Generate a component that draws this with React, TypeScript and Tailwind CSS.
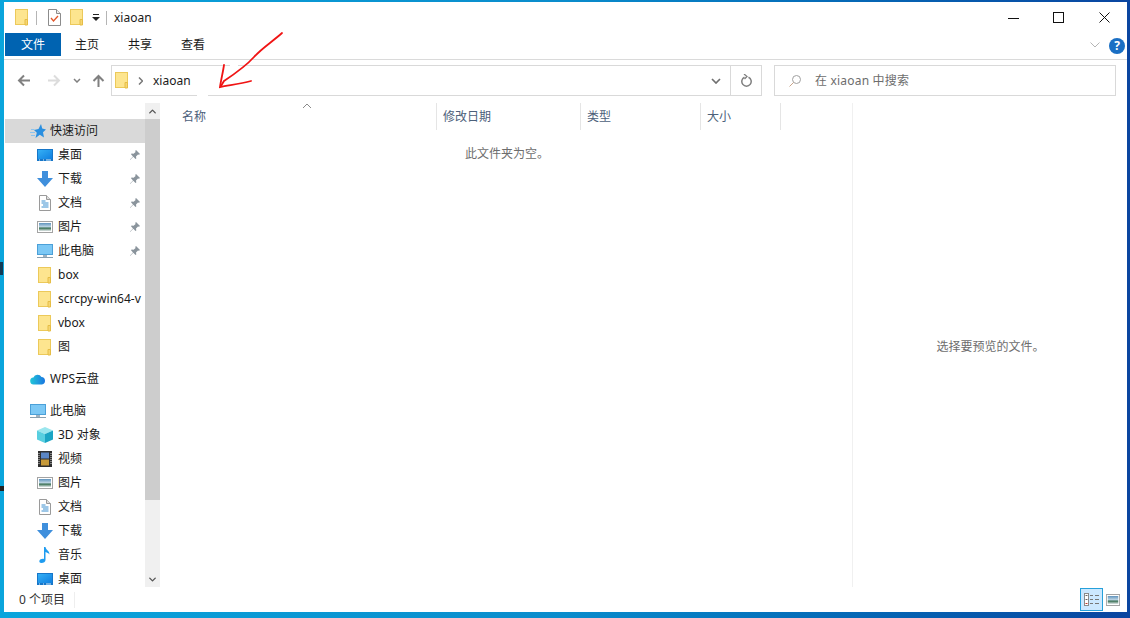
import { ChevronDown, ChevronUp } from "lucide-react";
import type { ReactNode } from "react";

/** Explorer window showing an empty folder, with a hand-drawn red arrow on top. */

function FolderIcon() {
  return (
    <svg width="14" height="17" viewBox="0 0 14 17" aria-hidden="true">
      <rect x="0.5" y="0.5" width="12" height="15" fill="#fde58f" stroke="#ecc95a" />
      <path d="M10 16V10.5h2.5V16z" fill="#f6d673" stroke="#e6bd45" strokeWidth="1" />
    </svg>
  );
}

function ChecklistIcon() {
  return (
    <svg width="13" height="17" viewBox="0 0 13 17" aria-hidden="true">
      <path d="M.5.5h8l4 4v12H.5z" fill="#fff" stroke="#8c8c8c" />
      <path d="M8.5.5v4h4" fill="#eee" stroke="#8c8c8c" />
      <path d="M3 9l2.500 3L10 7" fill="none" stroke="#e2572b" strokeWidth="1.300" />
    </svg>
  );
}

function StarIcon() {
  return (
    <svg width="16" height="15" viewBox="0 0 16 15" aria-hidden="true">
      <path d="M11 0l1.200 4.500L16 5.500l-3 2.800 1 5.200-4.200-2.800L5.500 14l1.300-5.200L4 6l4.500-1z" fill="#2a8fe0" />
      <path d="M1 5.500h3.500M0 8.500h5M1 11.500h4" stroke="#8cc4ee" strokeWidth="1" />
    </svg>
  );
}

function DesktopIcon() {
  return (
    <svg width="16" height="12" viewBox="0 0 16 12" aria-hidden="true">
      <defs>
        <linearGradient id="deskFill" x1="0" y1="0" x2="1" y2="1">
          <stop offset="0" stopColor="#35b0f5" />
          <stop offset="1" stopColor="#0f7fe0" />
        </linearGradient>
      </defs>
      <rect width="16" height="12" fill="#1776c8" />
      <rect x="1" y="1" width="14" height="9" fill="url(#deskFill)" />
      <path d="M2 11h1M6 11h1M9 11h5" stroke="#d6ecfb" strokeWidth="1" />
    </svg>
  );
}

function DownloadIcon() {
  return (
    <svg width="16" height="16" viewBox="0 0 16 16" aria-hidden="true">
      <path d="M5 0h6v7h5l-8 9-8-9h5z" fill="#3f8fdc" />
    </svg>
  );
}

function DocIcon() {
  return (
    <svg width="12" height="16" viewBox="0 0 12 16" aria-hidden="true">
      <path d="M.5.500h7l4 4v11H.5z" fill="#fff" stroke="#9a9a9a" />
      <path d="M7.500.500v4h4" fill="#ddd" stroke="#9a9a9a" />
      <path d="M2.500 6h4M2.500 8h7M4 10h5.500M2.500 12h7" stroke="#3a8fd0" strokeWidth="1" />
    </svg>
  );
}

function PictureIcon({ width = 16 }: { width?: number }) {
  return (
    <svg width={width} height="12" viewBox="0 0 16 12" preserveAspectRatio="none" aria-hidden="true">
      <defs>
        <linearGradient id="picSky" x1="0" y1="0" x2="0" y2="1">
          <stop offset="0" stopColor="#5f93bd" />
          <stop offset="0.450" stopColor="#b9d2e2" />
          <stop offset="0.650" stopColor="#3f7459" />
          <stop offset="1" stopColor="#e3e8ea" />
        </linearGradient>
      </defs>
      <rect x="0.500" y="0.500" width="15" height="11" fill="#fff" stroke="#a3a3a3" />
      <rect x="2" y="2" width="12" height="8" fill="url(#picSky)" />
    </svg>
  );
}

function PcIcon() {
  return (
    <svg width="16" height="15" viewBox="0 0 16 15" aria-hidden="true">
      <rect x="0.500" y="0.500" width="15" height="10" fill="#7cc8f5" stroke="#4ba0d8" />
      <rect x="6" y="11" width="4" height="2" fill="#9fb2c0" />
      <rect y="13" width="16" height="1" fill="#8aa0b0" />
    </svg>
  );
}

function CloudIcon() {
  return (
    <svg width="16" height="12" viewBox="0 0 16 12" aria-hidden="true">
      <defs>
        <linearGradient id="wpsCloud" x1="0" x2="1">
          <stop offset="0" stopColor="#22c7d8" />
          <stop offset="1" stopColor="#1a76e0" />
        </linearGradient>
      </defs>
      <path d="M4 11.500a3.500 3.500 0 0 1-.6-7A4.500 4.500 0 0 1 11.500 4 3.800 3.800 0 0 1 12 11.500z" fill="url(#wpsCloud)" />
    </svg>
  );
}

function CubeIcon() {
  return (
    <svg width="16" height="16" viewBox="0 0 16 16" aria-hidden="true">
      <path d="M8 0l8 3.500L8 7 0 3.500z" fill="#9ae6ee" />
      <path d="M0 3.500L8 7v9l-8-3.500z" fill="#58cfe0" />
      <path d="M16 3.500L8 7v9l8-3.500z" fill="#1ba5c4" />
    </svg>
  );
}

function FilmIcon() {
  return (
    <svg width="14" height="16" viewBox="0 0 14 16" aria-hidden="true">
      <rect width="14" height="16" fill="#2f2f2f" />
      <rect x="3" y="1.500" width="8" height="6" fill="#5b86c4" />
      <rect x="3" y="8.500" width="8" height="6" fill="#c79a3a" />
      <path d="M1 2v12M13 2v12" stroke="#d8d8d8" strokeWidth="1" strokeDasharray="1 1" />
    </svg>
  );
}

function MusicIcon() {
  return (
    <svg width="12" height="16" viewBox="0 0 12 16" aria-hidden="true">
      <path d="M5 0h1.500c.4 3 4 3.500 4 7.500-1-1.500-2.500-2-4-2.500v8c0 2-2 3-4 3S0 14.500.5 13.500 3 11.500 5 12z" fill="#1e9cf0" />
    </svg>
  );
}

function PinIcon() {
  return (
    <svg width="10" height="10" viewBox="0 0 10 10" aria-hidden="true">
      <path d="M6 0l4 4-1 .8-1-.3L6 6.500l.3 2L5.500 9 3.300 6.700 0 10l-.2-.2L3 6.400 1 4.300l.6-.7 2 .2L5.600 2l-.4-1z" fill="#8a949c" />
    </svg>
  );
}

function NavArrow({ d, className }: { d: string; className: string }) {
  return (
    <svg className={className} width="13" height="13" viewBox="0 0 13 13" fill="none" aria-hidden="true">
      <path d={d} stroke="currentColor" strokeWidth="2" />
    </svg>
  );
}

function NavRow({ icon, label, pinned, deep = true, active = false }: { icon: ReactNode; label: string; pinned?: boolean; deep?: boolean; active?: boolean }) {
  return (
    <div className={`flex h-6 items-center whitespace-nowrap ${active ? "bg-[#d9d9d9]" : ""} ${deep ? "pl-[32px]" : "pl-[25px]"}`}>
      <span className="flex w-4 shrink-0 justify-center">{icon}</span>
      <span className={`min-w-0 flex-1 ${deep ? "ml-[5px]" : "ml-[4px]"}`}>{label}</span>
      {pinned && (
        <span className="mr-[5px] ml-1 flex w-[10px] shrink-0">
          <PinIcon />
        </span>
      )}
    </div>
  );
}

function ColumnHead({ label, className }: { label: string; className: string }) {
  return <div className={`flex h-full shrink-0 items-center border-r border-[#e5e5e5] ${className}`}>{label}</div>;
}

export default function App() {
  return (
    <div className="relative h-[618px] w-[1130px] overflow-hidden bg-gradient-to-r from-[#0aa5dc] via-[#0a8ccc] to-[#0a45a0] pt-[2px] pr-[3px] pb-[6px] pl-[4px] font-['Noto_Sans','Noto_Sans_CJK_SC',sans-serif] text-[12px] text-[#1a1a1a]">
      <div className="flex h-full flex-col bg-white">
        {/* title bar */}
        <div className="flex h-[31px] shrink-0 items-center pl-[11px]">
          <FolderIcon />
          <span className="ml-[7px] h-[14px] w-px bg-[#b5b5b5]" />
          <span className="ml-[11px] flex">
            <ChecklistIcon />
          </span>
          <span className="ml-[9px] flex">
            <FolderIcon />
          </span>
          <svg className="ml-[8px]" width="8" height="7" viewBox="0 0 8 7" aria-hidden="true">
            <path d="M1 0h6v1H1zM0 3h8L4 7z" fill="#222" />
          </svg>
          <span className="ml-[6px] h-[14px] w-px bg-[#b5b5b5]" />
          <span className="ml-[7px] text-[12px]">xiaoan</span>
          <div className="ml-auto flex items-center pr-[17px]">
            <svg width="12" height="12" viewBox="0 0 12 12" aria-hidden="true">
              <path d="M1 6.500h11" stroke="#111" strokeWidth="1" />
            </svg>
            <svg className="ml-[34px]" width="11" height="11" viewBox="0 0 11 11" aria-hidden="true">
              <rect x="0.500" y="0.500" width="10" height="10" fill="none" stroke="#111" />
            </svg>
            <svg className="ml-[35px]" width="11" height="11" viewBox="0 0 11 11" aria-hidden="true">
              <path d="M.5.500l10 10M10.500.500l-10 10" stroke="#111" strokeWidth="1" />
            </svg>
          </div>
        </div>

        {/* ribbon tabs */}
        <div className="flex h-[27px] shrink-0 border-b border-[#dadada] pr-[2px]">
          <div className="ml-px flex h-[23px] w-[56px] items-center justify-center bg-[#0063b1] text-white">文件</div>
          <div className="ml-[14px] flex h-[23px] items-center">主页</div>
          <div className="ml-[29px] flex h-[23px] items-center">共享</div>
          <div className="ml-[29px] flex h-[23px] items-center">查看</div>
          <div className="ml-auto flex h-[23px] items-center">
            <svg width="10" height="6" viewBox="0 0 10 6" aria-hidden="true">
              <path d="M.5.500L5 5 9.500.500" fill="none" stroke="#b5b5b5" />
            </svg>
            <span className="mt-[3px] ml-[9px] flex h-4 w-4 items-center justify-center rounded-full bg-[#1a6fc4] text-[12px] font-bold text-white">?</span>
          </div>
        </div>

        {/* address row */}
        <div className="flex h-[43px] shrink-0 items-start pt-[5px]">
          <div className="flex h-[31px] w-[107px] shrink-0 items-center">
            <NavArrow className="ml-[13px] text-[#808080]" d="M13 6.500H2M7 1.500l-5 5 5 5" />
            <NavArrow className="ml-[18px] text-[#dcdcdc]" d="M0 6.500h11M6 1.500l5 5-5 5" />
            <svg className="ml-[12px] text-[#808080]" width="8" height="5" viewBox="0 0 8 5" fill="none" aria-hidden="true">
              <path d="M1 1l3 3 3-3" stroke="currentColor" strokeWidth="1.500" />
            </svg>
            <NavArrow className="ml-[11px] text-[#808080]" d="M6.500 13V2M1.500 7l5-5 5 5" />
          </div>
          <div className="flex h-[31px] w-[651px] shrink-0 items-center border border-[#d9d9d9]">
            <span className="ml-[3px] flex">
              <FolderIcon />
            </span>
            <svg className="ml-[9px]" width="5" height="8" viewBox="0 0 5 8" aria-hidden="true">
              <path d="M1 .5L4.500 4 1 7.500" fill="none" stroke="#777" strokeWidth="1.500" />
            </svg>
            <span className="ml-[10px]">xiaoan</span>
            <svg className="mr-[9px] ml-auto text-[#707070]" width="10" height="6" viewBox="0 0 10 6" fill="none" aria-hidden="true">
              <path d="M1 1l4 4 4-4" stroke="currentColor" strokeWidth="1.700" />
            </svg>
            <div className="flex h-full w-[31px] items-center justify-center border-l border-[#d9d9d9] text-[#808080]">
              <svg width="11" height="13" viewBox="0 0 11 13" fill="none" aria-hidden="true">
                <path d="M3.500 3.200A4.700 4.700 0 1 0 7.500 3.200" stroke="currentColor" strokeWidth="1.500" />
                <path d="M3 0l3 2.500L3.500 5" stroke="currentColor" strokeWidth="1.300" />
              </svg>
            </div>
          </div>
          <div className="ml-[12px] flex h-[31px] w-[342px] shrink-0 items-center border border-[#d9d9d9] text-[#6d6d6d]">
            <svg className="ml-[14px]" width="12" height="12" viewBox="0 0 12 12" aria-hidden="true">
              <circle cx="7.500" cy="4.500" r="4" fill="none" stroke="#a0a0a0" />
              <path d="M4.500 7.500L.5 11.500" stroke="#c9a58a" strokeWidth="1" />
            </svg>
            <span className="ml-[14px] tracking-[0.2px]">在 xiaoan 中搜索</span>
          </div>
        </div>

        {/* body */}
        <div className="flex min-h-0 flex-1">
          <div className="w-[141px] shrink-0 overflow-hidden pt-[16px] pl-px">
            <NavRow active deep={false} icon={<StarIcon />} label="快速访问" />
            <NavRow pinned icon={<DesktopIcon />} label="桌面" />
            <NavRow pinned icon={<DownloadIcon />} label="下载" />
            <NavRow pinned icon={<DocIcon />} label="文档" />
            <NavRow pinned icon={<PictureIcon />} label="图片" />
            <NavRow pinned icon={<PcIcon />} label="此电脑" />
            <NavRow icon={<FolderIcon />} label="box" />
            <NavRow icon={<FolderIcon />} label="scrcpy-win64-v" />
            <NavRow icon={<FolderIcon />} label="vbox" />
            <NavRow icon={<FolderIcon />} label="图" />
            <div className="mt-2">
              <NavRow deep={false} icon={<CloudIcon />} label="WPS云盘" />
            </div>
            <div className="mt-2">
              <NavRow deep={false} icon={<PcIcon />} label="此电脑" />
            </div>
            <NavRow icon={<CubeIcon />} label="3D 对象" />
            <NavRow icon={<FilmIcon />} label="视频" />
            <NavRow icon={<PictureIcon />} label="图片" />
            <NavRow icon={<DocIcon />} label="文档" />
            <NavRow icon={<DownloadIcon />} label="下载" />
            <NavRow icon={<MusicIcon />} label="音乐" />
            <NavRow icon={<DesktopIcon />} label="桌面" />
          </div>

          {/* sidebar scrollbar */}
          <div className="flex w-[15px] shrink-0 flex-col bg-[#f0f0f0]">
            <div className="flex h-[16px] items-center justify-center text-[#555]">
              <ChevronUp size={11} strokeWidth={3} />
            </div>
            <div className="h-[381px] bg-[#cdcdcd]" />
            <div className="mt-auto flex h-[16px] items-center justify-center text-[#555]">
              <ChevronDown size={11} strokeWidth={3} />
            </div>
          </div>

          {/* file list */}
          <div className="flex min-w-0 flex-1 flex-col">
            <div className="relative flex h-[27px] shrink-0 text-[#4c607a]">
              <ColumnHead label="名称" className="w-[277px] pl-[22px]" />
              <ColumnHead label="修改日期" className="w-[144px] pl-[6px]" />
              <ColumnHead label="类型" className="w-[120px] pl-[6px]" />
              <ColumnHead label="大小" className="w-[80px] pl-[6px]" />
              <svg className="absolute top-0 left-[142px]" width="10" height="6" viewBox="0 0 10 6" aria-hidden="true">
                <path d="M1 5l4-4 4 4" fill="none" stroke="#8a8a8a" />
              </svg>
            </div>
            <div className="mt-[15px] pl-[2px] text-center text-[#6d6d6d]">此文件夹为空。</div>
          </div>

          {/* preview pane */}
          <div className="flex w-[275px] shrink-0 items-center justify-center border-l border-[#f0f0f0] pt-[4px] pl-[1px] text-[#6d6d6d]">
            选择要预览的文件。
          </div>
        </div>

        {/* status bar */}
        <div className="flex h-[25px] shrink-0 items-center pl-[15px] text-[#333]">
          <span>0 个项目</span>
          <span className="ml-[9px] h-[16px] w-px bg-[#eeeeee]" />
          <div className="ml-auto flex items-center pr-[7px]">
            <div className="flex h-[23px] w-[23px] items-center justify-center border border-[#26a0da] bg-[#cce8ff]">
              <svg width="15" height="13" viewBox="0 0 15 13" aria-hidden="true">
                <rect x="0.500" y="0.500" width="4" height="12" fill="#fff" stroke="#8a8a8a" />
                <path d="M1.500 2.500h2M1.500 6.500h2" stroke="#666" />
                <path d="M1.500 10.500h2" stroke="#c0392b" />
                <path d="M6 2.500h3M11 2.500h4M6 6.500h3M11 6.500h4M6 10.500h3M11 10.500h4" stroke="#777" />
              </svg>
            </div>
            <span className="ml-[3px] flex">
              <PictureIcon width={14} />
            </span>
          </div>
        </div>
      </div>

      {/* hand-drawn annotation over the window */}
      <svg className="absolute top-0 left-0" width="1130" height="618" viewBox="0 0 1130 618" fill="none" aria-hidden="true">
        <rect x="197" y="94" width="11" height="3" fill="#fff" />
        <rect x="230" y="64" width="8" height="3" fill="#fff" />
        <path
          d="M282 33C272 42 262 48 254 57C246 66 236 73 224 81L221 86"
          stroke="#f01414"
          strokeWidth="1.800"
          strokeLinecap="round"
        />
        <path d="M224 65C223 72 221 80 220 87C230 85 240 84 251 81" stroke="#f01414" strokeWidth="1.800" strokeLinecap="round" />
      </svg>

      {/* bits of the desktop behind the window */}
      <span className="absolute top-[262px] left-0 h-[13px] w-[3px] bg-[#123a55]" />
      <span className="absolute top-[486px] left-0 h-[5px] w-[4px] bg-[#222222]" />
    </div>
  );
}
